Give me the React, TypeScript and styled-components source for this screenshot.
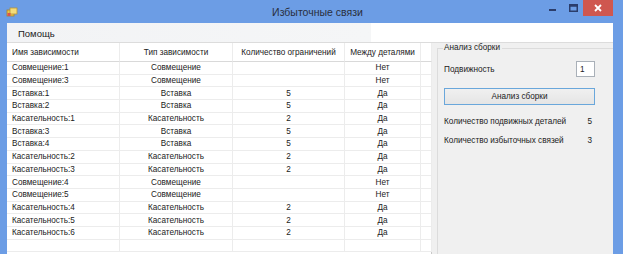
import React from 'react';
import styled, {createGlobalStyle} from 'styled-components';

const GlobalStyle = createGlobalStyle`
  html, body {
    margin: 0;
    padding: 0;
    background: #ffffff;
  }
  body {
    font-family: "Liberation Sans", Arial, sans-serif;
  }
`;

const rows = [
    {name: 'Совмещение:1', type: 'Совмещение', count: '', between: 'Нет'},
    {name: 'Совмещение:3', type: 'Совмещение', count: '', between: 'Нет'},
    {name: 'Вставка:1', type: 'Вставка', count: '5', between: 'Да'},
    {name: 'Вставка:2', type: 'Вставка', count: '5', between: 'Да'},
    {name: 'Касательность:1', type: 'Касательность', count: '2', between: 'Да'},
    {name: 'Вставка:3', type: 'Вставка', count: '5', between: 'Да'},
    {name: 'Вставка:4', type: 'Вставка', count: '5', between: 'Да'},
    {name: 'Касательность:2', type: 'Касательность', count: '2', between: 'Да'},
    {name: 'Касательность:3', type: 'Касательность', count: '2', between: 'Да'},
    {name: 'Совмещение:4', type: 'Совмещение', count: '', between: 'Нет'},
    {name: 'Совмещение:5', type: 'Совмещение', count: '', between: 'Нет'},
    {name: 'Касательность:4', type: 'Касательность', count: '2', between: 'Да'},
    {name: 'Касательность:5', type: 'Касательность', count: '2', between: 'Да'},
    {name: 'Касательность:6', type: 'Касательность', count: '2', between: 'Да'},
    {name: '', type: '', count: '', between: ''},
];

const AppIcon = () => (
    <svg width="12" height="11" viewBox="0 0 12 11">
        <rect x="1" y="3" width="7" height="6" fill="#e8c34a" stroke="#a8842a" strokeWidth="0.8"/>
        <rect x="4" y="1" width="7" height="6" fill="#f4dc7a" stroke="#b89436" strokeWidth="0.8"/>
        <rect x="1.5" y="6" width="3" height="3" fill="#d9534f"/>
    </svg>
);

export default function App() {
    return (
        <>
            <GlobalStyle/>
            <Window>
                <TitleBar>
                    <IconSlot><AppIcon/></IconSlot>
                    <Title>Избыточные связи</Title>
                    <Controls>
                        <CtrlButton>
                            <svg width="8" height="8" viewBox="0 0 8 8">
                                <rect x="0" y="5" width="7" height="2" fill="#2b3d6b"/>
                            </svg>
                        </CtrlButton>
                        <CtrlButton>
                            <svg width="9" height="8" viewBox="0 0 9 8">
                                <rect x="0.75" y="0.75" width="7.5" height="6.5" fill="none" stroke="#2b3d6b" strokeWidth="1.5"/>
                                <rect x="0.75" y="0.75" width="7.5" height="2" fill="#2b3d6b"/>
                            </svg>
                        </CtrlButton>
                        <CloseButton>
                            <svg width="8" height="8" viewBox="0 0 8 8">
                                <path d="M1 1 L7 7 M7 1 L1 7" stroke="#ffffff" strokeWidth="1.8"/>
                            </svg>
                        </CloseButton>
                    </Controls>
                </TitleBar>

                <Body>
                    <MenuBar>
                        <MenuItem>Помощь</MenuItem>
                    </MenuBar>

                    <Content>
                        <Grid>
                            <HeaderCell align="left">Имя зависимости</HeaderCell>
                            <HeaderCell>Тип зависимости</HeaderCell>
                            <HeaderCell>Количество ограничений</HeaderCell>
                            <HeaderCell>Между деталями</HeaderCell>
                            <HeaderCell/>
                            {rows.map((r, i) => (
                                <React.Fragment key={i}>
                                    <Cell align="left">{r.name}</Cell>
                                    <Cell>{r.type}</Cell>
                                    <Cell>{r.count}</Cell>
                                    <Cell>{r.between}</Cell>
                                    <Cell/>
                                </React.Fragment>
                            ))}
                        </Grid>

                        <SidePanel>
                            <GroupBox>
                                <Legend>Анализ сборки</Legend>
                                <FieldRow>
                                    <Label>Подвижность</Label>
                                    <NumberBox>1</NumberBox>
                                </FieldRow>
                                <ActionButton>Анализ сборки</ActionButton>
                                <ResultRow>
                                    <Label>Количество подвижных деталей</Label>
                                    <Value>5</Value>
                                </ResultRow>
                                <ResultRow>
                                    <Label>Количество избыточных связей</Label>
                                    <Value>3</Value>
                                </ResultRow>
                            </GroupBox>
                        </SidePanel>
                    </Content>
                </Body>
            </Window>
        </>
    );
}


const Window = styled.div`
  width: 623px;
  height: 254px;
  background: #6c9de5;
  display: flex;
  flex-direction: column;
  overflow: hidden;
`;

const TitleBar = styled.div`
  height: 23px;
  display: flex;
  align-items: center;
`;
const IconSlot = styled.div`
  width: 12px;
  height: 11px;
  margin-left: 6px;
  margin-top: 1px;
  display: flex;
`;
const Title = styled.div`
  flex: 1;
  text-align: center;
  font-size: 10.5px;
  color: #2a2f3c;
  padding-left: 74px;
  padding-top: 1px;
`;
const Controls = styled.div`
  display: flex;
  align-self: flex-start;
  height: 16px;
  margin-right: 10px;
`;
const CtrlButton = styled.div`
  width: 20px;
  height: 15px;
  display: flex;
  align-items: center;
  justify-content: center;
`;
const CloseButton = styled(CtrlButton)`
  width: 30px;
  height: 16px;
  background: #cf574f;
`;

const Body = styled.div`
  flex: 1;
  margin: 0 10px 0 7px;
  display: flex;
  flex-direction: column;
  background: #f0f0f0;
  min-height: 0;
`;

const MenuBar = styled.div`
  height: 19px;
  display: flex;
  align-items: center;
  background: linear-gradient(to right, #f2f3f5 0%, #f5f6f7 60%, #ffffff 60%);
  border-bottom: 1px solid #dcdcdc;
`;
const MenuItem = styled.div`
  font-size: 9.5px;
  color: #1b1b1b;
  padding: 1px 11px 0;
`;

const Content = styled.div`
  flex: 1;
  display: flex;
  min-height: 0;
`;

const Grid = styled.div`
  width: 425px;
  background: #ffffff;
  display: grid;
  grid-template-columns: 113px 113px 112px 76px 11px;
  grid-auto-rows: 12.7px;
  grid-template-rows: 19px;
  align-content: start;
  border-right: 1px solid #c8c8c8;
  box-sizing: border-box;
`;
const HeaderCell = styled.div<{align?: string}>`
  font-size: 8.2px;
  color: #222;
  display: flex;
  align-items: center;
  justify-content: ${p => p.align === 'left' ? 'flex-start' : 'center'};
  padding-left: ${p => p.align === 'left' ? '5px' : '0'};
  border-right: 1px solid #ececec;
  border-bottom: 1px solid #d9d9d9;
  box-sizing: border-box;
  white-space: nowrap;
`;
const Cell = styled.div<{align?: string}>`
  font-size: 8.2px;
  color: #222;
  display: flex;
  align-items: center;
  justify-content: ${p => p.align === 'left' ? 'flex-start' : 'center'};
  padding-left: ${p => p.align === 'left' ? '5px' : '0'};
  border-right: 1px solid #ececec;
  border-bottom: 1px solid #ececec;
  box-sizing: border-box;
  white-space: nowrap;
`;

const SidePanel = styled.div`
  flex: 1;
  background: #f0f0f0;
  padding: 0 0 0 5px;
  display: flex;
`;
const GroupBox = styled.div`
  flex: 1;
  margin-top: 5px;
  border: 1px solid #dcdcdc;
  border-right: none;
  border-bottom: none;
  padding: 0 18px 0 6px;
  display: flex;
  flex-direction: column;
  position: relative;
`;
const Legend = styled.div`
  position: absolute;
  top: -6px;
  left: 5px;
  padding: 0 2px 0 1px;
  background: #f0f0f0;
  font-size: 8.2px;
  color: #222;
`;
const FieldRow = styled.div`
  display: flex;
  align-items: center;
  justify-content: space-between;
  margin-top: 12px;
`;
const Label = styled.div`
  font-size: 8.2px;
  color: #222;
`;
const NumberBox = styled.div`
  width: 19px;
  height: 16px;
  background: #ffffff;
  border: 1px solid #a9b0b8;
  font-size: 8.2px;
  color: #222;
  display: flex;
  align-items: center;
  padding-left: 3px;
  box-sizing: border-box;
`;
const ActionButton = styled.div`
  margin-top: 11px;
  height: 15px;
  border: 1px solid #6aa7db;
  background: linear-gradient(#f0f0f0, #e5e5e5);
  font-size: 8.2px;
  color: #222;
  display: flex;
  align-items: center;
  justify-content: center;
`;
const ResultRow = styled.div`
  display: flex;
  align-items: center;
  justify-content: space-between;
  margin-top: 12px;
  padding-right: 3px;
  &:last-child {
    margin-top: 10px;
  }
`;
const Value = styled.div`
  font-size: 8.2px;
  color: #222;
`;
